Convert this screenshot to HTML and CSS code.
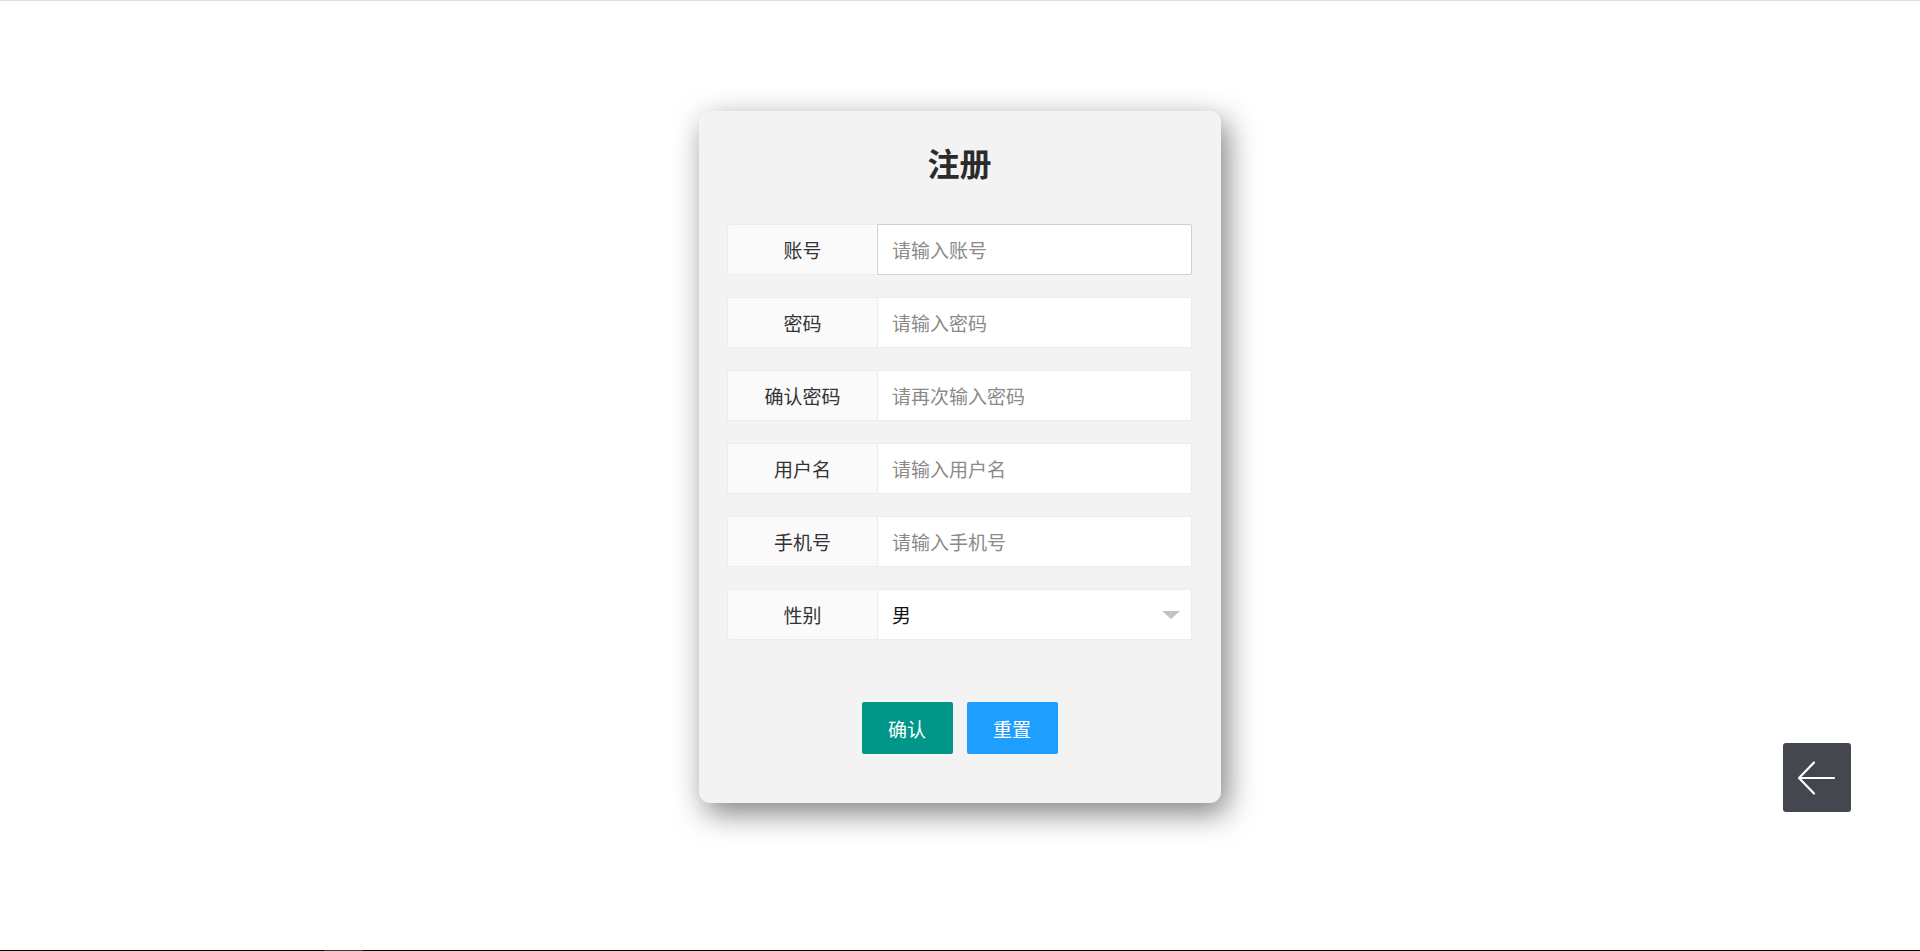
FILE: index.html
```html
<!DOCTYPE html>
<html lang="zh-CN">
<head>
<meta charset="utf-8">
<title>注册</title>
<link rel="stylesheet" href="styles.css">
</head>
<body>
<div class="topline"></div>
<main class="page">
  <form class="card">
    <h2 class="title">注册</h2>
    <div class="rows">
      <div class="row">
        <label class="label">账号</label>
        <input class="input focused" type="text" placeholder="请输入账号" autofocus>
      </div>
      <div class="row">
        <label class="label">密码</label>
        <input class="input" type="password" placeholder="请输入密码">
      </div>
      <div class="row">
        <label class="label">确认密码</label>
        <input class="input" type="password" placeholder="请再次输入密码">
      </div>
      <div class="row">
        <label class="label">用户名</label>
        <input class="input" type="text" placeholder="请输入用户名">
      </div>
      <div class="row">
        <label class="label">手机号</label>
        <input class="input" type="text" placeholder="请输入手机号">
      </div>
      <div class="row">
        <label class="label">性别</label>
        <div class="select">
          <span class="select-value">男</span>
          <span class="caret-down"></span>
        </div>
      </div>
    </div>
    <div class="actions">
      <button type="button" class="btn btn-green">确认</button>
      <button type="reset" class="btn btn-blue">重置</button>
    </div>
  </form>
</main>
<a class="back" href="#" aria-label="返回">
  <svg width="68" height="68" viewBox="0 0 68 68">
    <path d="M16 34 H51 M31 18.5 L16 34 L31 49.5" fill="none" stroke="#fff" stroke-width="2.2" stroke-linecap="round" stroke-linejoin="round"/>
  </svg>
</a>
<div class="bottomline"><span class="seg"></span></div>
</body>
</html>
```

FILE: styles.css
```css
* { box-sizing: border-box; }
html, body { margin: 0; padding: 0; }
body {
  background: #fff;
  font-family: "Noto Sans CJK SC", "Noto Sans", "Liberation Sans", sans-serif;
  color: #333;
  height: 951px;
  overflow: hidden;
  position: relative;
}
.topline {
  height: 1px;
  background: #dcdde2;
}
.page {
  display: flex;
  justify-content: center;
  padding-top: 110px;
}
.card {
  width: 522px;
  background: #f3f3f3;
  border-radius: 11px;
  box-shadow: 6px 10px 30px rgba(0, 0, 0, 0.5);
  padding: 31px 29px 49px 28px;
  margin: 0;
}
.title {
  margin: 0 0 42px;
  font-size: 32px;
  line-height: 40px;
  font-weight: 700;
  text-align: center;
  color: #2b2b2b;
}
.rows {
  display: flex;
  flex-direction: column;
  gap: 22px;
}
.row {
  display: flex;
  height: 51px;
  width: 465px;
}
.label {
  width: 150px;
  flex: none;
  background: #fafafa;
  border: 1px solid #ececec;
  border-right: none;
  border-radius: 2px 0 0 2px;
  font-size: 19px;
  color: #333;
  display: flex;
  align-items: center;
  justify-content: center;
}
.input, .select {
  flex: 1;
  min-width: 0;
  height: 51px;
  background: #fff;
  border: 1px solid #ececec;
  border-radius: 0 2px 2px 0;
  padding: 0 14px;
  font-size: 19px;
  font-family: inherit;
  color: #333;
  outline: none;
}
.input.focused { border-color: #d2d2d2; }
.input::placeholder { color: #8a8a8a; }
.select {
  display: flex;
  align-items: center;
  justify-content: space-between;
  padding-right: 11px;
}
.select-value { color: #111; }
.caret-down {
  width: 0;
  height: 0;
  border-left: 9px solid transparent;
  border-right: 9px solid transparent;
  border-top: 8px solid #c2c2c2;
}
.actions {
  display: flex;
  justify-content: center;
  gap: 14px;
  margin-top: 62px;
}
.btn {
  width: 91px;
  height: 52px;
  border: none;
  border-radius: 2px;
  color: #fff;
  font-size: 19px;
  font-family: inherit;
  cursor: pointer;
}
.btn-green { background: #009688; }
.btn-blue { background: #1e9fff; }
.back {
  position: absolute;
  right: 69px;
  top: 743px;
  width: 68px;
  height: 69px;
  background: #45474f;
  border-radius: 3px;
  display: flex;
  align-items: center;
  justify-content: center;
}
.back svg { display: block; }
.bottomline {
  position: absolute;
  left: 0;
  right: 0;
  bottom: 0;
  height: 1px;
  background: #000;
}
.bottomline .seg {
  position: absolute;
  left: 324px;
  width: 39px;
  height: 1px;
  background: #3a3a3a;
}
```
